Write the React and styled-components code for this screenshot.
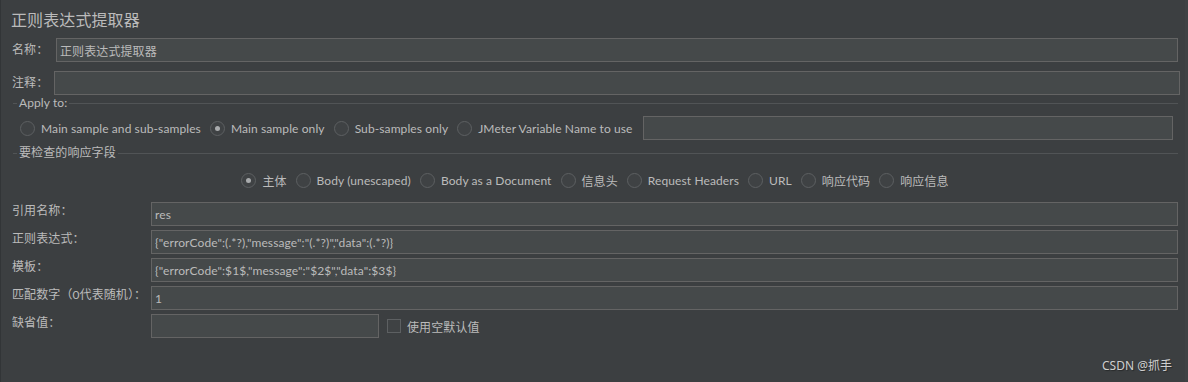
import React, { useState } from 'react';
import styled, { createGlobalStyle } from 'styled-components';

const GlobalStyle = createGlobalStyle`
    html, body {
        margin: 0;
        padding: 0;
        background: #3c3f41;
    }
    body {
        font-family: Lato, 'Noto Sans CJK SC', sans-serif;
        font-size: 12px;
        letter-spacing: 0.1px;
        color: #bbbbbb;
    }
`;

const App = () => {
    const [applyTo, setApplyTo] = useState('main');
    const [field, setField] = useState('body');
    const [useEmpty, setUseEmpty] = useState(false);

    const applyOptions = [
        { id: 'all', label: 'Main sample and sub-samples' },
        { id: 'main', label: 'Main sample only' },
        { id: 'sub', label: 'Sub-samples only' },
        { id: 'var', label: 'JMeter Variable Name to use' },
    ];
    const fieldOptions = [
        { id: 'body', label: '主体' },
        { id: 'unescaped', label: 'Body (unescaped)' },
        { id: 'document', label: 'Body as a Document' },
        { id: 'headers', label: '信息头' },
        { id: 'reqHeaders', label: 'Request Headers' },
        { id: 'url', label: 'URL' },
        { id: 'code', label: '响应代码' },
        { id: 'message', label: '响应信息' },
    ];

    return (
        <Panel>
            <GlobalStyle />
            <Title>正则表达式提取器</Title>

            <TopRow $gap={6}>
                <TopLabel $width={45}>名称：</TopLabel>
                <TextInput defaultValue="正则表达式提取器" />
            </TopRow>
            <TopRow $gap={9} $right={-2}>
                <TopLabel $width={43}>注释：</TopLabel>
                <TextInput defaultValue="" />
            </TopRow>

            <GroupHeader $top={0}>
                <GroupTick />
                <GroupTitle>Apply to:</GroupTitle>
                <GroupLine />
            </GroupHeader>
            <RadioRow $top={5} $left={8}>
                {applyOptions.map(o => (
                    <RadioItem key={o.id} onClick={() => setApplyTo(o.id)}>
                        <RadioCircle $checked={applyTo === o.id} />
                        <span>{o.label}</span>
                    </RadioItem>
                ))}
                <VariableInput defaultValue="" />
            </RadioRow>

            <GroupHeader $top={5}>
                <GroupTick />
                <GroupTitle>要检查的响应字段</GroupTitle>
                <GroupLine />
            </GroupHeader>
            <RadioRow $top={7} $center>
                {fieldOptions.map(o => (
                    <RadioItem key={o.id} onClick={() => setField(o.id)}>
                        <RadioCircle $checked={field === o.id} />
                        <span>{o.label}</span>
                    </RadioItem>
                ))}
            </RadioRow>

            <Form>
                <FormRow>
                    <FormLabel>引用名称：</FormLabel>
                    <TextInput defaultValue="res" />
                </FormRow>
                <FormRow>
                    <FormLabel>正则表达式：</FormLabel>
                    <TextInput defaultValue={'{"errorCode":(.*?),"message":"(.*?)","data":(.*?)}'} />
                </FormRow>
                <FormRow>
                    <FormLabel>模板：</FormLabel>
                    <TextInput defaultValue={'{"errorCode":$1$,"message":"$2$","data":$3$}'} />
                </FormRow>
                <FormRow>
                    <FormLabel>匹配数字（0代表随机）：</FormLabel>
                    <TextInput defaultValue="1" />
                </FormRow>
                <FormRow>
                    <FormLabel>缺省值：</FormLabel>
                    <ShortInput defaultValue="" />
                    <CheckItem onClick={() => setUseEmpty(!useEmpty)}>
                        <CheckBox $checked={useEmpty} />
                        <span>使用空默认值</span>
                    </CheckItem>
                </FormRow>
            </Form>

            <Watermark>CSDN @抓手</Watermark>
        </Panel>
    );
};

const Panel = styled.div`
    position: relative;
    box-sizing: border-box;
    width: 1188px;
    height: 382px;
    padding: 8px 7px 0 11px;
    border-left: 1px solid #323537;
    border-right: 3px solid #3f4244;
    background: #3c3f41;
    display: flex;
    flex-direction: column;
`;

const Title = styled.div`
    height: 24px;
    line-height: 24px;
    font-size: 16px;
    margin-left: -1px;
    color: #bbbbbb;
`;

const TopRow = styled.div`
    display: flex;
    align-items: center;
    margin-top: ${p => p.$gap}px;
    margin-right: ${p => p.$right || 0}px;
`;

const TopLabel = styled.div`
    flex: 0 0 ${p => p.$width - 1}px;
    line-height: 16px;
    white-space: nowrap;
`;

const TextInput = styled.input`
    flex: 1;
    box-sizing: border-box;
    min-width: 0;
    height: 24px;
    padding: 0 3px;
    background: #45494a;
    border: 1px solid #646464;
    color: #bbbbbb;
    font-family: inherit;
    font-size: 12px;
    letter-spacing: 0.1px;
    outline: none;
`;

const ShortInput = styled(TextInput)`
    flex: 0 0 228px;
`;

const VariableInput = styled(TextInput)`
    margin-left: 1px;
    margin-right: 5px;
`;

const GroupHeader = styled.div`
    display: flex;
    align-items: center;
    height: 16px;
    margin-top: ${p => p.$top}px;
    margin-left: 1px;
`;

const GroupTick = styled.div`
    width: 4px;
    height: 1px;
    background: #515456;
`;

const GroupTitle = styled.div`
    padding: 0 2px;
    line-height: 16px;
    white-space: nowrap;
`;

const GroupLine = styled.div`
    flex: 1;
    height: 1px;
    background: #515456;
`;

const RadioRow = styled.div`
    display: flex;
    align-items: center;
    justify-content: ${p => (p.$center ? 'center' : 'flex-start')};
    gap: 9px;
    height: 24px;
    margin-top: ${p => p.$top}px;
    padding-left: ${p => p.$left || 0}px;
`;

const RadioItem = styled.label`
    display: flex;
    align-items: center;
    gap: 6px;
    white-space: nowrap;
    cursor: pointer;
`;

const RadioCircle = styled.span`
    box-sizing: border-box;
    width: 15px;
    height: 15px;
    border-radius: 50%;
    border: 1px solid #5d6062;
    background: #3f4244;
    display: flex;
    align-items: center;
    justify-content: center;
    &::after {
        content: '';
        width: 5px;
        height: 5px;
        border-radius: 50%;
        background: ${p => (p.$checked ? '#a9abad' : 'transparent')};
    }
`;

const Form = styled.div`
    display: flex;
    flex-direction: column;
    gap: 4px;
    margin-top: 10px;
`;

const FormRow = styled.div`
    display: flex;
    align-items: flex-start;
`;

const FormLabel = styled.div`
    flex: 0 0 139px;
    line-height: 18px;
    white-space: nowrap;
`;

const CheckItem = styled.label`
    display: flex;
    align-items: center;
    gap: 6px;
    height: 24px;
    margin-left: 8px;
    cursor: pointer;
`;

const CheckBox = styled.span`
    box-sizing: border-box;
    width: 14px;
    height: 14px;
    border: 1px solid #5d6062;
    background: ${p => (p.$checked ? '#5d6062' : '#3f4244')};
`;

const Watermark = styled.div`
    position: absolute;
    right: 13px;
    bottom: 8px;
    font-family: 'Noto Sans', 'Noto Sans CJK SC', sans-serif;
    font-size: 12px;
    letter-spacing: 0;
    color: #cfcfcf;
    text-shadow: 1px 1px 1px rgba(0, 0, 0, 0.35);
`;

export default App;
